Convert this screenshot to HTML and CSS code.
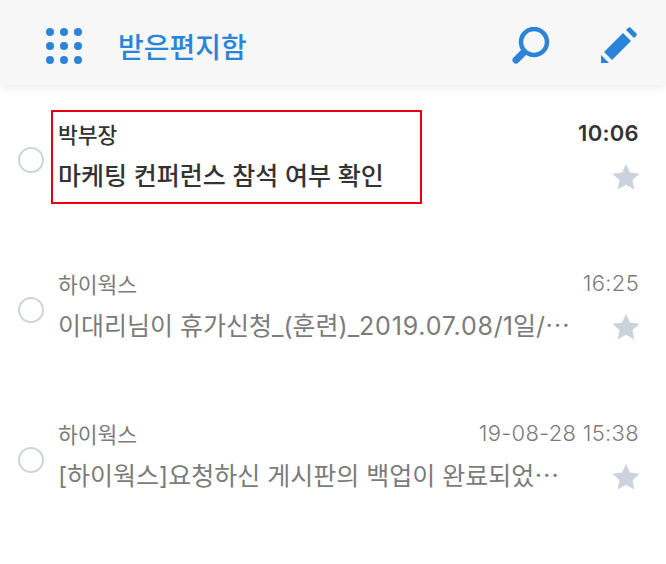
FILE: index.html
```html
<!DOCTYPE html>
<html lang="ko">
<head>
    <meta charset="UTF-8">
    <meta name="viewport" content="width=device-width, initial-scale=1.0">
    <title>받은편지함</title>
    <link rel="stylesheet" href="styles.css">
</head>
<body>
    <header class="topbar">
        <svg class="menu-icon" width="36" height="36" viewBox="0 0 36 36">
            <circle cx="4" cy="4" r="4"/><circle cx="18" cy="4" r="4"/><circle cx="32" cy="4" r="4"/>
            <circle cx="4" cy="18" r="4"/><circle cx="18" cy="18" r="4"/><circle cx="32" cy="18" r="4"/>
            <circle cx="4" cy="32" r="4"/><circle cx="18" cy="32" r="4"/><circle cx="32" cy="32" r="4"/>
        </svg>
        <h1 class="title">받은편지함</h1>
        <svg class="search-icon" width="38" height="38" viewBox="0 0 38 38">
            <circle cx="22" cy="15" r="13" fill="none" stroke="#2a84d8" stroke-width="4.5"/>
            <path d="M11 26 L4 33" fill="none" stroke="#2a84d8" stroke-width="7" stroke-linecap="round"/>
        </svg>
        <svg class="edit-icon" width="38" height="37" viewBox="0 0 38 37">
            <path d="M28 1 a2 2 0 0 1 3 0 l5 5 a2 2 0 0 1 0 3 l-2 2 -8 -8 z"/>
            <path d="M23 6 l8 8 -19 19 -8 -8 z"/>
            <path d="M1 28 l8 8 h-8 z"/>
        </svg>
    </header>

    <main class="mail-list">
        <div class="mail unread">
            <span class="check"></span>
            <div class="mail-body">
                <div class="mail-top"><span class="sender">박부장</span><span class="time">10:06</span></div>
                <div class="mail-bottom">
                    <span class="subject">마케팅 컨퍼런스 참석 여부 확인</span>
                    <svg class="star" width="28" height="27" viewBox="0 0 28 27"><path d="M14 1 l4 8.5 9.5 1.2 -7 6.5 1.9 9.3 -8.4 -4.7 -8.4 4.7 1.9 -9.3 -7 -6.5 9.5 -1.2 z"/></svg>
                </div>
            </div>
            <div class="highlight"></div>
        </div>
        <div class="mail">
            <span class="check"></span>
            <div class="mail-body">
                <div class="mail-top"><span class="sender">하이웍스</span><span class="time">16:25</span></div>
                <div class="mail-bottom">
                    <span class="subject">이대리님이 휴가신청_(훈련)_<span class="date">2019.07.08</span>/1일/<span class="dots">…</span></span>
                    <svg class="star" width="28" height="27" viewBox="0 0 28 27"><path d="M14 1 l4 8.5 9.5 1.2 -7 6.5 1.9 9.3 -8.4 -4.7 -8.4 4.7 1.9 -9.3 -7 -6.5 9.5 -1.2 z"/></svg>
                </div>
            </div>
        </div>
        <div class="mail">
            <span class="check"></span>
            <div class="mail-body">
                <div class="mail-top"><span class="sender">하이웍스</span><span class="time">19-08-28 15:38</span></div>
                <div class="mail-bottom">
                    <span class="subject">[하이웍스]요청하신 게시판의 백업이 완료되었<span class="dots">…</span></span>
                    <svg class="star" width="28" height="27" viewBox="0 0 28 27"><path d="M14 1 l4 8.5 9.5 1.2 -7 6.5 1.9 9.3 -8.4 -4.7 -8.4 4.7 1.9 -9.3 -7 -6.5 9.5 -1.2 z"/></svg>
                </div>
            </div>
        </div>
    </main>
</body>
</html>
```

FILE: styles.css
```css
* {
    margin: 0;
    padding: 0;
    box-sizing: border-box;
}

body {
    font-family: Inter, "Noto Sans CJK KR", sans-serif;
    background-color: #fff;
    color: #7b7b7b;
    overflow: hidden;
}

.topbar {
    height: 85px;
    display: flex;
    align-items: center;
    padding: 6px 28px 0 46px;
    background-color: #f7f7f8;
    box-shadow: 0 3px 8px rgba(0, 0, 0, 0.07);
}

.menu-icon {
    fill: #2a84d8;
}

.title {
    flex: 1;
    margin-left: 36px;
    font-size: 28px;
    font-weight: 500;
    color: #2a84d8;
}

.search-icon {
    margin-right: 50px;
}

.edit-icon {
    fill: #2a84d8;
}

.mail-list {
    padding-top: 19px;
}

.mail {
    position: relative;
    height: 150px;
    display: flex;
    padding: 14px 27px 0 18px;
}

.check {
    flex: none;
    width: 26px;
    height: 26px;
    margin-top: 29px;
    margin-right: 14px;
    border: 2px solid #d0d3da;
    border-radius: 50%;
}

.mail-body {
    flex: 1;
    min-width: 0;
}

.mail-top,
.mail-bottom {
    display: flex;
    justify-content: space-between;
    align-items: center;
}

.mail-top {
    height: 30px;
    margin-bottom: 10px;
}

.mail-bottom {
    height: 32px;
}

.sender {
    font-size: 21.5px;
}

.time {
    font-size: 22px;
    font-weight: 300;
    letter-spacing: 0.3px;
}

.subject {
    font-size: 25px;
    white-space: nowrap;
}

.date {
    letter-spacing: 0.8px;
}

.dots {
    font-family: "Noto Sans CJK KR", sans-serif;
}

.star {
    flex: none;
    margin: 5px -1px 0 0;
    fill: #ccd2dc;
}

.unread .sender,
.unread .subject,
.unread .time {
    color: #333;
    font-weight: 500;
}

.unread .time {
    font-weight: 600;
}

.highlight {
    position: absolute;
    left: 51px;
    top: 6px;
    width: 371px;
    height: 94px;
    border: 2px solid #e60012;
}
```
